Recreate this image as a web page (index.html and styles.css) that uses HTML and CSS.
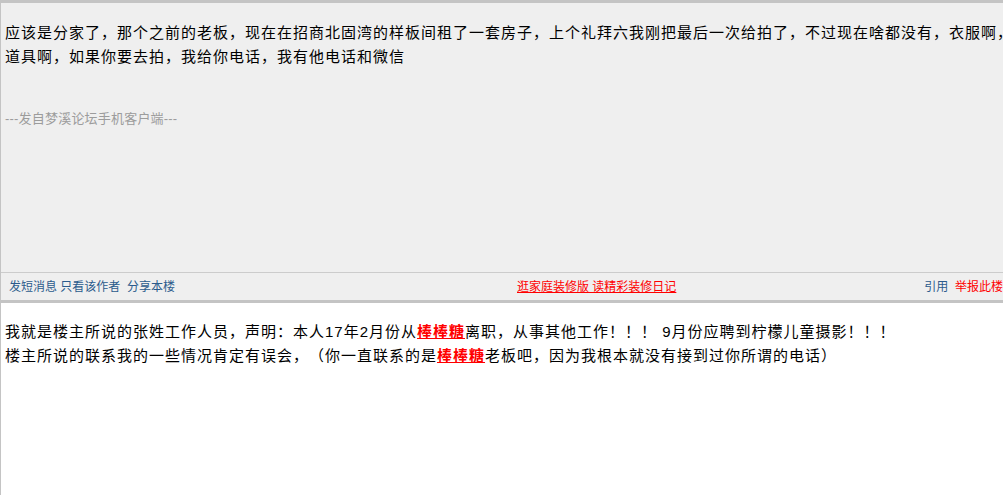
FILE: index.html
```html
<!DOCTYPE html>
<html lang="zh-CN">
<head>
<meta charset="utf-8">
<title>梦溪论坛</title>
<link rel="stylesheet" href="styles.css">
</head>
<body>
<div class="thread">
  <div class="post post-grey">
    <div class="post-body">
      <div class="msg">应该是分家了，那个之前的老板，现在在招商北固湾的样板间租了一套房子，上个礼拜六我刚把最后一次给拍了，不过现在啥都没有，衣服啊，<br>道具啊，如果你要去拍，我给你电话，我有他电话和微信</div>
      <div class="sig">---发自梦溪论坛手机客户端---</div>
    </div>
    <div class="post-foot">
      <div class="foot-left"><a class="blue" href="#">发短消息</a> <a class="blue" href="#">只看该作者</a>&nbsp; <a class="blue" href="#">分享本楼</a></div>
      <div class="foot-mid"><a class="promo" href="#">逛家庭装修版 读精彩装修日记</a></div>
      <div class="foot-right"><a class="blue" href="#">引用</a>&nbsp; <a class="red" href="#">举报此楼</a></div>
    </div>
  </div>
  <div class="post post-white">
    <div class="post-body">
      <div class="msg">我就是楼主所说的张姓工作人员，声明：本人17年2月份从<a class="hl" href="#">棒棒糖</a>离职，从事其他工作！！！ 9月份应聘到柠檬儿童摄影！！！<br>楼主所说的联系我的一些情况肯定有误会，（你一直联系的是<a class="hl" href="#">棒棒糖</a>老板吧，因为我根本就没有接到过你所谓的电话）</div>
    </div>
  </div>
</div>
</body>
</html>
```

FILE: styles.css
```css
html, body {
  margin: 0;
  padding: 0;
  overflow: hidden;
  background: #ffffff;
}
body {
  width: 1003px;
  height: 495px;
  font-family: "Liberation Sans", "Noto Sans CJK SC", sans-serif;
  color: #000;
  text-spacing-trim: space-all;
}
.thread {
  width: 1024px;
  height: 495px;
  border-left: 1px solid #c4c4c4;
  box-sizing: border-box;
}
.post-grey {
  background: #efefef;
  border-top: 3px solid #c4c4c4;
  border-bottom: 3px solid #c4c4c4;
}
.post-grey .post-body {
  height: 269px;
  padding: 18px 0 0 4px;
  box-sizing: border-box;
}
.msg {
  font-size: 15px;
  letter-spacing: 1px;
  line-height: 24px;
  white-space: nowrap;
}
.sig {
  margin-top: 41px;
  font-size: 13px;
  letter-spacing: 0.2px;
  line-height: 18px;
  color: #9c9c9c;
}
.post-foot {
  display: grid;
  grid-template-columns: 508px auto 1fr;
  align-items: center;
  height: 27px;
  border-top: 1px solid #cccccc;
  font-size: 12px;
  line-height: 16px;
  padding: 0 21px 0 8px;
}
.foot-right {
  justify-self: end;
}
a {
  text-decoration: none;
}
.blue {
  color: #2b5b8c;
}
.red {
  color: #ff0000;
}
.promo {
  color: #ff0000;
  font-size: 12px;
  text-decoration: underline;
}
.post-white .post-body {
  padding: 17px 0 0 4px;
}
.hl {
  color: #ff0000;
  font-weight: bold;
  text-decoration: underline;
}
```
